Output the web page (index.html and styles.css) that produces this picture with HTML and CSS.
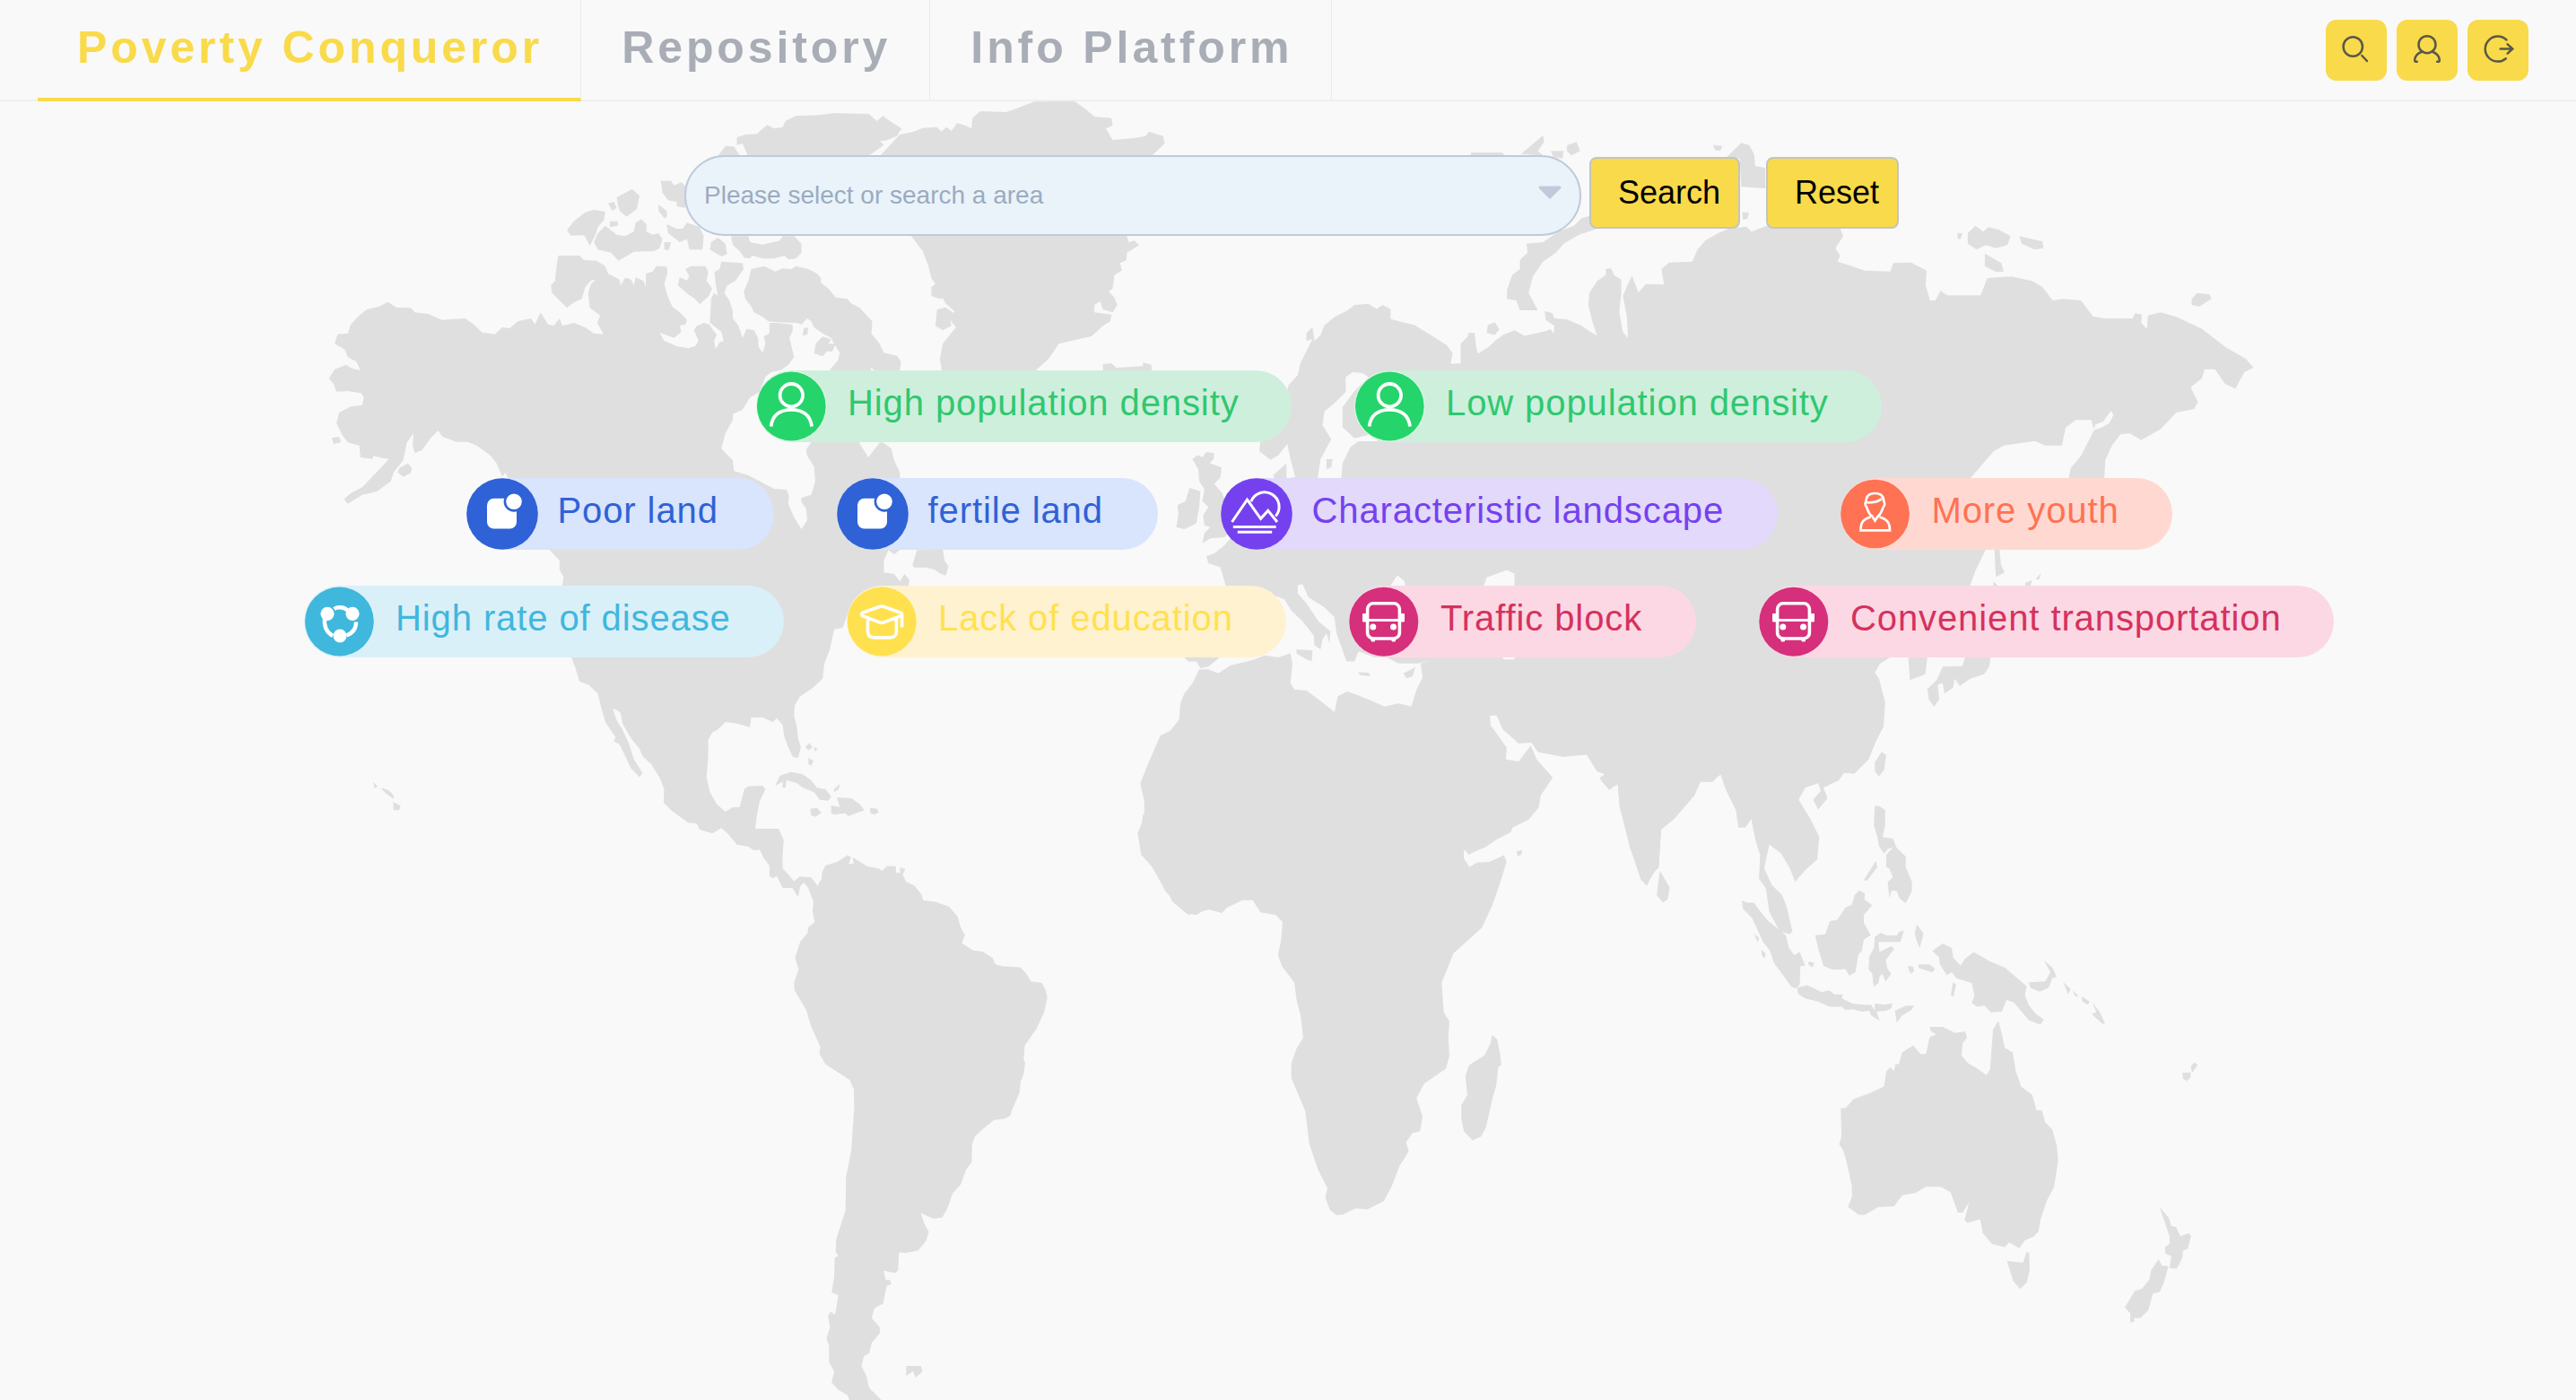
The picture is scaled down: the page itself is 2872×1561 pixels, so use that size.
FILE: index.html
```html
<!DOCTYPE html>
<html lang="en">
<head>
<meta charset="utf-8">
<title>Poverty Conqueror</title>
<link rel="stylesheet" href="styles.css">
</head>
<body>
<svg class="world" viewBox="0 0 2872 1561" aria-hidden="true">
  <!-- North America and Greenland -->
  <g transform="translate(340 100) scale(.63776 .33333)">
    <path d="M145,710 160,728 185,730 192,745 215,750 240,770 280,765 295,785 310,812 332,818 345,795 358,798 372,775 395,765 402,785 412,745 425,785 435,790 445,765 450,790 470,780 490,795 505,815 522,818 511,780 516,755 498,730 495,680 500,650 508,636 500,638 490,660 484,700 470,712 458,730 448,710 432,680 430,655 437,640 440,590 443,555 480,555 488,570 510,572 525,590 530,615 550,635 552,655 560,628 570,635 575,655 578,628 592,640 596,660 596,615 608,608 614,590 632,592 634,612 628,650 634,690 642,725 655,745 668,770 665,785 655,790 658,810 645,830 620,812 628,840 650,858 670,865 682,858 688,840 684,822 680,805 685,790 697,780 707,785 712,800 720,820 715,840 718,868 725,845 732,840 728,810 708,780 710,700 715,680 722,690 718,650 716,610 725,600 728,575 765,580 767,600 752,640 738,655 733,680 742,705 748,740 748,765 758,790 765,830 772,800 785,805 792,830 793,860 800,880 805,850 802,825 812,815 812,780 825,780 852,785 853,805 847,830 852,870 855,895 845,920 832,938 815,945 805,960 795,1010 778,1030 765,1070 748,1085 748,1105 735,1150 728,1200 735,1215 748,1240 750,1275 775,1290 800,1315 820,1335 842,1338 846,1360 845,1385 855,1430 868,1470 878,1440 876,1400 868,1380 868,1365 885,1355 892,1310 890,1260 878,1225 876,1205 885,1180 890,1100 925,1050 965,1150 970,1185 985,1230 1005,1180 1010,1180 1025,1200 1030,1240 1040,1280 1040,1540 430,1540 355,1300 350,1280 345,1295 335,1250 325,1225 300,1190 285,1178 265,1178 240,1160 233,1140 220,1165 205,1205 192,1215 188,1190 190,1150 178,1180 172,1240 155,1280 150,1310 125,1345 100,1355 75,1385 68,1370 80,1350 100,1330 125,1280 147,1235 135,1232 120,1225 118,1235 97,1230 95,1190 75,1180 65,1155 55,1115 60,1080 80,1060 100,1055 103,1030 98,1015 75,1008 55,1010 50,985 42,965 52,935 72,920 82,932 97,938 90,910 75,895 70,870 52,850 57,818 75,815 80,785 95,755 108,735 130,725Z"/>
    <path d="M780,600 803,590 822,608 835,598 850,600 858,590 880,600 895,615 902,630 902,645 915,665 928,695 948,700 955,715 970,730 982,755 992,775 990,815 1003,845 1012,880 1035,890 1042,910 1040,938 1010,960 990,930 985,960 925,960 918,935 932,905 935,880 925,850 920,830 905,815 890,795 885,775 878,765 868,785 860,780 828,778 810,775 800,760 785,745 780,725 770,700 767,675 775,640Z"/>
    <path d="M893,848 905,826 920,835 915,850 928,850 922,875 912,875 905,892 890,882ZM872,798 880,795 878,820 870,822ZM665,600 675,590 700,590 705,610 702,640 712,665 706,690 690,718 682,700 670,685 652,655 655,628 668,638 672,625ZM745,490 775,490 778,510 800,518 830,505 835,490 855,490 868,515 868,545 858,565 845,568 838,555 820,565 800,565 782,555 778,565 768,562 760,540 748,520ZM710,510 722,495 735,515 738,550 728,558 708,535ZM505,510 512,480 525,455 545,485 560,490 575,475 578,445 588,433 597,450 597,475 608,485 618,480 625,500 620,530 610,540 575,542 548,572 535,545 512,535ZM458,470 470,440 490,410 505,402 525,408 523,435 512,460 508,485 498,522 488,487 465,488ZM545,360 572,332 585,355 580,400 562,425 550,405 547,385ZM530,380 540,375 545,395 537,405ZM533,440 547,440 547,455 533,460ZM632,450 650,465 660,465 668,445 690,460 697,490 695,535 672,535 668,500 655,510 635,480ZM628,510 640,510 636,537 628,535ZM618,385 632,405 633,425 628,430 618,405ZM622,305 640,305 645,320 658,310 670,330 665,395 650,390 650,375 635,370 625,345ZM722,222 735,188 750,190 760,220ZM755,160 770,150 790,148 808,118 820,130 835,125 840,105 858,88 900,85 925,78 960,80 985,80 1000,105 1010,88 1025,108 1043,130 1035,155 1015,170 1005,172 1012,185 985,222 775,225 765,180 755,185Z"/>
    <path d="M1005,222 1030,170 1040,150 1065,140 1080,128 1105,125 1112,140 1122,125 1130,138 1140,112 1155,120 1165,130 1167,95 1180,72 1225,75 1245,62 1275,40 1345,38 1365,65 1380,90 1410,95 1412,120 1400,130 1412,168 1450,162 1470,155 1475,140 1500,155 1503,180 1480,222 1437,490 1440,510 1450,505 1458,520 1450,530 1437,545 1436,570 1425,580 1428,605 1415,620 1412,665 1405,675 1415,695 1420,720 1412,745 1395,735 1390,708 1380,720 1380,745 1410,752 1408,775 1395,790 1375,825 1340,840 1318,850 1300,900 1278,938 1278,960 1115,960 1110,900 1115,850 1138,795 1128,770 1135,740 1120,715 1115,698 1110,700 1095,690 1095,660 1102,650 1095,630 1090,590 1080,540 1060,490ZM1105,735 1120,728 1132,745 1140,758 1128,770 1130,790 1115,805 1102,790ZM1395,918 1410,915 1418,930 1465,925 1465,912 1480,920 1480,990 1400,990 1395,940ZM47,1165 60,1162 63,1180 50,1185ZM165,1265 180,1250 187,1265 185,1282 172,1295 162,1280Z"/>
  </g>
  <!-- Central America and the Caribbean -->
  <g transform="translate(340 550) scale(.63776 .33333)">
    <path d="M410,150 428,190 445,225 445,255 452,280 450,310 455,450 465,545 472,580 480,630 495,640 512,670 517,710 525,765 543,815 540,830 550,840 560,880 570,920 585,950 590,935 575,890 567,840 555,790 545,760 538,720 545,725 552,735 555,770 570,820 585,855 590,880 605,905 620,950 628,990 627,1035 640,1060 670,1102 685,1105 690,1125 712,1138 728,1120 740,1140 755,1175 775,1182 785,1195 795,1192 802,1220 812,1245 812,1280 818,1288 825,1280 835,1320 852,1320 862,1350 866,1315 872,1302 880,1320 890,1370 900,1330 895,1310 885,1285 865,1282 855,1298 845,1275 835,1255 835,1210 837,1160 828,1122 787,1122 790,1080 795,1030 805,990 800,978 775,980 768,990 760,1050 748,1050 735,1065 720,1040 708,1000 702,950 705,880 705,825 712,800 722,790 735,765 755,770 778,782 780,750 800,750 818,765 825,752 835,775 838,815 845,850 853,882 862,885 867,850 862,820 860,780 855,745 856,710 865,680 888,650 905,620 908,570 918,520 925,455 940,450 950,400 975,330 1040,320 1055,308 1057,290 1048,270 1040,295 1030,270 1012,265 1012,225 1020,190 1030,205 1040,190 1040,150Z"/>
    <path d="M1062,240 1070,190 1115,188 1118,225 1125,245 1120,275 1110,268 1100,255 1085,248 1065,248ZM822,978 830,945 850,932 870,940 885,960 895,985 910,990 920,1015 915,1028 900,1025 890,1000 870,985 860,970 842,960 840,985 835,985 835,965ZM920,1070 920,1045 935,1050 930,1018 955,1020 970,1040 978,1060 950,1080 945,1070 925,1075ZM883,1055 895,1052 903,1068 893,1082 885,1078ZM988,1052 1000,1055 1003,1068 995,1075 988,1070ZM875,848 882,835 887,850 880,860ZM889,848 896,855 892,864ZM880,885 889,895 885,912 880,905ZM925,990 935,972 933,990 925,1000ZM119,965 127,980 122,988ZM132,985 146,993 155,1010 155,1022 142,1005ZM154,1032 167,1045 165,1060 155,1060Z"/>
  </g>
  <!-- South America and southern Africa -->
  <g transform="translate(860 920) scale(.57398 .4088)">
    <path d="M90,165 98,145 98,130 105,110 128,100 148,82 155,88 150,105 160,105 158,88 170,98 185,112 208,118 215,125 225,112 242,112 242,130 250,130 250,115 260,120 255,135 262,155 278,165 292,190 295,205 320,210 345,222 362,250 368,280 376,300 370,322 392,342 410,345 430,362 435,380 450,385 483,388 495,405 505,427 525,430 533,450 536,470 530,510 515,555 492,602 490,640 493,648 490,680 484,700 482,730 468,775 464,792 455,800 432,805 410,830 395,850 390,870 389,920 378,940 368,980 352,1005 342,1045 332,1070 315,1074 290,1058 298,1090 306,1110 300,1135 285,1160 262,1167 248,1165 246,1215 240,1222 218,1215 222,1240 230,1240 233,1252 224,1257 217,1305 200,1318 195,1345 210,1368 211,1385 195,1412 190,1440 180,1448 175,1475 184,1500 190,1535 215,1570 152,1570 148,1555 130,1540 117,1520 122,1490 112,1465 112,1420 107,1400 114,1370 110,1340 115,1327 124,1335 130,1282 117,1275 122,1235 123,1180 130,1175 125,1165 126,1130 144,1050 145,960 155,890 161,770 160,720 152,695 105,652 93,622 95,605 76,545 68,505 45,450 44,430 53,393 46,362 56,318 70,295 72,278 84,265 80,235 82,205 72,175ZM262,1475 290,1475 294,1490 280,1507 275,1490 262,1502Z"/>
    <path d="M722,-30 719,0 712,22 718,80 740,115 752,145 765,180 805,240 825,245 845,228 875,240 885,225 915,205 935,205 950,238 980,245 993,265 990,315 984,355 992,385 1016,430 1020,475 1028,520 1033,580 1020,610 1010,650 1010,690 1037,780 1045,870 1062,940 1080,990 1076,1015 1085,1050 1098,1064 1110,1062 1135,1045 1158,1048 1190,1025 1205,985 1220,930 1238,890 1233,865 1245,840 1260,835 1265,795 1253,745 1268,705 1310,665 1317,630 1315,580 1317,535 1306,510 1302,430 1325,350 1380,280 1400,220 1415,160 1428,100 1423,82 1395,100 1370,102 1356,115 1345,90 1345,65 1355,75 1370,60 1388,58 1405,40 1435,18 1440,-10ZM1400,572 1410,585 1415,620 1418,655 1412,660 1408,710 1400,750 1388,825 1378,850 1362,860 1345,835 1340,800 1340,765 1352,735 1348,685 1355,655 1385,628 1397,595ZM1447,72 1458,68 1457,80 1450,85Z"/>
  </g>
  <!-- Northern Africa, the Middle East and Europe -->
  <g transform="translate(1220 320) scale(.446429)">
    <path d="M108,1365 125,1325 125,1285 115,1240 135,1190 165,1120 190,1108 212,1080 215,1040 225,1015 245,990 262,955 285,955 310,965 340,945 360,940 395,932 425,920 460,925 490,915 495,940 490,990 500,1005 530,1008 560,1030 600,1062 608,1022 632,1010 665,1022 725,1048 760,1040 792,1048 805,1005 820,975 815,940 850,930 1000,900 1000,1068 988,1070 990,1095 1030,1150 1028,1180 1060,1185 1090,1145 1105,1180 1145,1225 1115,1270 1110,1300 1085,1330 1045,1350 1040,1362 1005,1380 975,1400 950,1410 935,1418 925,1405 900,1500 400,1510 345,1540 235,1568 195,1535 165,1470 120,1410Z"/>
    <path d="M1000,900 988,1070 1005,1070 1020,1105 1060,1140 1095,1138 1110,1162 1170,1172 1230,1168 1250,1200 1275,1218 1262,1225 1285,1255 1308,1242 1312,1300 1345,1420 1365,1480 1380,1495 1395,1465 1410,1450 1415,1355 1440,1330 1470,1290 1500,1265 1515,1235 1540,1235 1568,1215 1600,1000 1600,900ZM1413,1458 1437,1500 1432,1530 1420,1537 1405,1520 1408,1490Z"/>
    <path d="M890,192 895,165 880,145 840,120 800,95 770,88 740,80 740,55 720,45 705,55 685,42 650,45 630,60 600,75 575,95 565,120 550,135 545,100 530,115 530,135 545,130 515,190 508,220 485,245 470,320 415,385 412,410 440,432 460,420 482,392 490,430 502,475 480,478 480,440 447,470 460,500 400,560 325,645 300,665 280,672 285,690 315,700 328,745 320,800 240,850 225,925 235,935 255,935 265,952 285,948 310,928 360,850 430,780 455,772 475,780 492,808 520,835 548,870 550,895 565,905 570,880 580,865 587,890 590,860 560,835 530,790 508,765 508,745 520,742 535,775 575,800 600,825 605,865 630,935 650,935 660,910 700,925 730,925 760,940 810,940 830,935 1000,950 1600,950 1600,150 1258,122 1230,110 1190,85 1150,80 1150,122 1140,105 1105,118 1075,122 1050,108 1020,120 985,150 960,168 952,150 950,115 935,115 925,150 930,190ZM245,430 258,420 270,425 280,412 300,415 298,430 288,440 318,450 315,475 300,492 320,515 335,560 350,600 325,625 290,628 270,640 275,615 290,600 275,595 272,570 285,550 270,535 275,505 262,485 260,455ZM238,502 265,510 262,550 255,590 225,605 205,600 210,570 208,545 228,535ZM505,905 545,908 543,935 530,930 505,915ZM658,962 685,963 690,972 665,970ZM772,965 802,950 795,972 780,978ZM983,95 1000,88 1012,105 1000,120 980,115Z"/>
    <path class="water" d="M628,225 645,213 670,215 685,225 650,260 620,300 620,350 650,378 690,368 710,385 660,385 640,400 620,440 617,477 558,477 565,430 592,380 570,345 575,310 600,290 628,262ZM740,746 757,720 775,735 777,746ZM973,746 980,725 1030,707 1060,720 1067,738 1050,746ZM1020,924 1057,924 1053,930 1022,930Z"/>
    <path d="M580,430 595,430 592,450 580,455Z"/>
  </g>
  <!-- Russia and the Arctic islands -->
  <g transform="translate(1640 100) scale(.57398 .33333)">
    <path d="M-20,900 -20,850 0,815 8,830 12,885 35,860 50,835 85,808 100,825 145,808 160,825 162,790 145,770 143,740 158,748 162,765 185,768 215,790 245,825 235,770 228,720 230,680 245,640 262,620 262,600 272,597 278,620 292,635 292,680 288,745 295,810 305,832 303,760 295,690 305,650 313,622 325,678 340,650 375,652 370,600 385,578 430,575 440,535 455,505 480,480 500,465 535,458 545,475 575,455 715,455 723,490 708,530 717,555 712,575 740,590 765,605 815,608 820,580 855,578 885,605 883,655 892,705 902,705 912,673 925,688 990,688 1003,630 1050,625 1090,640 1110,660 1130,705 1150,700 1185,705 1208,758 1230,765 1285,765 1290,748 1303,752 1302,780 1313,800 1315,755 1340,745 1370,760 1420,800 1465,860 1505,900 1520,930 1502,945 1485,1000 1465,985 1445,935 1425,935 1420,965 1398,995 1412,1045 1405,1068 1370,1080 1340,1135 1302,1172 1280,1150 1262,1152 1245,1190 1232,1240 1230,1310 1190,1380 1160,1310 1165,1265 1185,1225 1210,1140 1205,1105 1175,1105 1155,1130 1148,1190 1115,1190 1095,1175 1035,1190 1015,1210 990,1260 970,1300 940,1400 1000,1540 -20,1540Z"/>
    <path class="water" d="M1208,1140 1213,1120 1228,1110 1243,1075 1248,1088 1240,1115 1225,1130Z"/>
    <path d="M235,420 245,465 210,485 180,515 165,545 140,575 120,625 112,680 130,738 95,738 88,705 70,700 70,670 80,620 95,600 95,570 110,545 108,515 140,510 170,475 200,455 215,430ZM965,480 980,455 995,475 1005,460 1025,468 1048,490 1042,520 1020,530 1000,520 982,535 965,515ZM1065,490 1110,508 1112,530 1095,535 1070,515ZM945,480 955,480 950,502 945,495ZM998,548 1030,580 1035,608 1020,610 998,590ZM1400,700 1410,680 1435,685 1438,700 1415,725 1400,720ZM470,185 488,188 485,203 475,203ZM497,225 525,178 540,185 550,215 552,255 572,262 572,330 525,325 522,230ZM527,410 540,410 537,432 528,435ZM97,215 115,190 140,152 142,175 130,205 140,220ZM155,205 180,205 178,230 160,225ZM187,185 205,175 212,205 195,220 186,205ZM0,210 60,210 70,225 0,225Z"/>
  </g>
  <!-- South and East Asia -->
  <g transform="translate(1700 550) scale(.57398 .33333)">
    <path d="M-20,100 -20,820 12,832 25,865 75,882 120,873 140,930 155,940 147,960 165,992 180,970 185,1050 205,1190 235,1312 260,1245 265,1125 290,1090 330,1010 340,965 365,965 380,938 390,990 410,1060 415,1118 428,1118 440,1090 448,1160 457,1210 455,1290 468,1320 475,1400 495,1465 515,1475 520,1465 508,1380 500,1345 480,1310 465,1255 475,1175 498,1205 515,1255 525,1300 545,1260 568,1225 572,1150 555,1090 532,1025 545,985 570,970 575,995 560,1025 570,1058 588,1020 580,985 610,960 620,935 640,938 668,890 682,830 697,780 700,700 688,620 680,600 690,570 710,548 745,548 748,625 778,605 782,548 800,500 865,310 875,260 895,190 895,100Z"/>
    <path d="M905,548 902,580 892,605 865,620 845,645 835,620 832,650 815,670 812,635 802,640 805,690 795,714 785,690 782,655 800,625 812,580 850,578 855,548ZM912,185 922,185 925,240 932,265 915,280ZM910,295 922,315 910,315ZM972,300 985,290 982,315 972,315ZM993,285 1003,268 998,290ZM680,900 693,865 702,875 698,925 688,947 680,930ZM680,1045 690,1048 700,1060 700,1110 695,1150 715,1155 722,1185 740,1215 740,1250 752,1300 752,1330 740,1372 728,1355 722,1330 712,1330 708,1355 705,1300 715,1285 708,1255 702,1250 702,1210 715,1185 705,1190 698,1205 688,1180 685,1150 678,1110ZM682,1230 685,1250 665,1295 658,1295Z"/>
  </g>
  <!-- Indonesia and Oceania -->
  <g transform="translate(1880 960) scale(.408163 .344388)">
    <path d="M152,127 165,135 185,135 200,160 225,195 262,230 272,240 280,280 295,305 310,295 325,340 312,340 310,400 300,412 288,408 240,330 228,290 210,262 180,185 155,155ZM303,410 330,402 350,412 370,425 390,418 405,432 428,432 425,445 455,462 485,465 505,465 515,485 515,462 545,465 563,460 560,478 545,485 520,487 528,517 505,500 500,485 480,488 455,480 435,482 425,472 390,472 360,455 325,445 305,430ZM570,485 600,468 623,468 615,482 590,500 575,523ZM352,240 380,237 392,195 413,190 435,150 452,142 460,110 473,95 488,105 487,125 508,143 485,175 485,200 504,240 485,255 480,290 470,305 462,360 445,372 435,350 400,352 375,340 362,290ZM515,245 532,232 545,240 575,242 580,230 595,225 585,262 525,262 528,295 560,275 568,285 545,320 550,350 560,365 545,390 535,365 528,375 525,395 512,407 508,365 498,350 500,310 513,280ZM630,205 648,235 638,282 630,260 624,235ZM605,340 620,342 622,358 612,365ZM633,335 665,335 680,350 672,360 635,347ZM728,393 737,400 730,440 723,435ZM335,325 350,330 345,345 333,335ZM185,237 200,250 195,263ZM205,287 217,300 215,315 207,308Z"/>
    <path d="M672,292 700,267 725,282 730,315 750,338 760,318 785,295 830,325 870,345 900,375 930,405 925,435 935,465 955,495 977,513 967,530 935,515 895,458 875,450 862,488 832,490 815,468 795,472 780,460 787,435 780,395 738,380 725,360 712,370 693,335 690,310ZM935,393 980,390 995,360 977,322 1000,345 1012,375 1000,380 990,410 965,423 940,410ZM1030,392 1050,415 1043,432ZM1055,418 1072,438 1062,438ZM1080,438 1102,455 1097,465 1082,455ZM1110,458 1130,490 1144,527 1137,527 1107,495 1120,490ZM1355,685 1378,685 1378,700 1368,712 1357,705ZM1378,665 1388,652 1397,660 1382,685Z"/>
    <path d="M665,537 700,537 735,557 762,552 767,572 755,590 752,630 770,655 795,672 820,693 830,675 838,545 853,518 862,560 870,605 892,620 900,680 915,730 945,757 957,807 972,808 980,845 1000,870 1012,920 1016,970 1005,1055 985,1100 968,1160 962,1200 950,1215 925,1228 910,1254 882,1235 870,1250 835,1240 810,1205 803,1160 768,1172 760,1162 773,1105 755,1138 742,1138 722,1072 695,1055 655,1055 625,1075 590,1082 568,1118 525,1120 487,1146 470,1145 442,1120 453,1085 452,1050 437,970 428,935 418,918 424,890 422,800 435,800 458,770 500,752 540,730 547,680 558,667 567,680 572,655 580,660 590,620 620,597 640,625 655,625 665,570 683,562 668,550ZM876,1295 920,1300 930,1265 937,1270 938,1325 930,1365 912,1386 893,1360ZM1293,1120 1318,1155 1325,1182 1338,1185 1350,1215 1372,1205 1379,1213 1370,1255 1357,1262 1355,1285 1340,1320 1320,1318 1325,1280 1308,1270 1308,1250 1320,1240 1320,1215ZM1290,1290 1300,1310 1317,1312 1305,1365 1293,1395 1275,1400 1262,1455 1240,1480 1222,1480 1225,1490 1213,1495 1213,1465 1198,1445 1225,1392 1245,1385 1265,1355 1270,1325Z"/>
  </g>
</svg>

<svg class="sprite" aria-hidden="true">
  <symbol id="person" viewBox="0 0 80 80">
    <circle cx="39.3" cy="40" r="39.3" fill="#e9f8ef"/><circle cx="39.3" cy="40" r="38.4" fill="#25d56b"/>
    <g fill="none" stroke="#fff" stroke-width="3.8"><circle cx="39.3" cy="27.7" r="12.7"/><path d="M16.6 62.5C18 49.5 27 43.8 39.3 43.8S60.6 49.5 62 62.5"/></g>
  </symbol>
  <symbol id="land" viewBox="0 0 80 80">
    <circle cx="40" cy="40" r="39.8" fill="#2f62d6"/>
    <rect x="23" y="22.7" width="33" height="33.8" rx="7.5" fill="#fff"/><circle cx="53" cy="26.3" r="11.4" fill="#2f62d6"/><circle cx="53" cy="26.3" r="8.8" fill="#fff"/>
  </symbol>
  <symbol id="landscape" viewBox="0 0 80 80">
    <circle cx="40" cy="40" r="39.8" fill="#7541ee"/>
    <path d="M12.5 49 29.5 24.2 44.6 45.3 52.7 36.4 63 49M33.8 26.2A16.2 16.2 0 1 1 61.3 42.5M13.8 54.5H61.6M18.8 60.3H57.2" fill="none" stroke="#fff" stroke-width="3"/>
  </symbol>
  <symbol id="youth" viewBox="0 0 80 80">
    <circle cx="38.5" cy="40" r="38.3" fill="#ff7253"/>
    <path d="M34.6 42.5C31 39.5 30.3 35 28.8 32 26.6 29 27.4 28 28.3 26.5 28.5 19.5 33 17 38.4 17s9.8 2.5 10 9.5c.9 1.5 1.7 2.5-.5 5.5-1.5 3-2.2 7.500-5.8 10.500M29.5 27.500C35 27.500 42.500 26.500 46 23M34.600 41.500 38.500 47.500 42.400 41.500M33.500 43.500C25.500 46 22.500 49 22.500 58.300H55C55 49 51.500 46 43.500 43.500" fill="none" stroke="#fff" stroke-width="2.7"/>
  </symbol>
  <symbol id="disease" viewBox="0 0 80 80">
    <circle cx="39.4" cy="40" r="38.4" fill="#40b7dd"/>
    <g fill="#fff"><circle cx="26" cy="31.300" r="7.600"/><circle cx="54" cy="31.300" r="7.600"/><circle cx="40" cy="56" r="7.500"/></g>
    <path d="M33.500 26C37 23.500 44 23.500 48.500 27.500M23 36C22 45 25 52 32 56M58 40.500C58 47.500 54 53 47.500 55.500" fill="none" stroke="#fff" stroke-width="4.400"/>
  </symbol>
  <symbol id="education" viewBox="0 0 80 80">
    <circle cx="39.200" cy="40" r="38.500" fill="#ffe14f"/>
    <path d="M36.500 23.500 17.500 30.300Q15.500 32 17.500 33.700L36.500 40.800Q39 42 41.500 40.800L60.500 33.700Q62.500 32 60.500 30.300L41.500 23.500Q39 22.500 36.500 23.500ZM61.600 32V46.500M23.500 36.500V51.500Q24 57.500 30 57.900H49Q55 57.500 55.400 51.500V36.500" fill="none" stroke="#fff" stroke-width="3.600"/>
  </symbol>
  <symbol id="bus" viewBox="0 0 80 80">
    <circle cx="38.800" cy="40.200" r="38.500" fill="#d62f7b"/>
    <path d="M20.600 38.400H56.200" stroke="#fff" stroke-width="3"/>
    <rect x="20.600" y="19.800" width="35.800" height="39.200" rx="6.500" fill="none" stroke="#fff" stroke-width="3.600"/>
    <path d="M15.500 31.500H19V40H15.500ZM58 31.500H61.500V40H58ZM25 60H28.500V62H25ZM48 60H51.500V62H48Z" fill="#fff" stroke="#fff"/>
    <g fill="#fff"><circle cx="26.800" cy="46" r="3.500"/><circle cx="49.500" cy="46" r="3.500"/></g>
  </symbol>
</svg>

<header class="header">
  <nav class="nav">
    <a class="tab active">Poverty Conqueror</a>
    <a class="tab">Repository</a>
    <a class="tab">Info Platform</a>
  </nav>
  <div class="actions">
    <button class="action" aria-label="Search"><svg viewBox="0 0 68 68"><circle cx="30.300" cy="30" r="10.700"/><path d="M40.300 40 46 46"/></svg></button>
    <button class="action" aria-label="Account"><svg viewBox="0 0 68 68"><circle cx="34" cy="27.700" r="9.500"/><path d="M28.500 35.500C23 37.500 20.500 41.500 20.200 44.500 20 46.500 20.800 47.100 22.800 46.700M39.500 35.500C45 37.500 47.500 41.500 47.800 44.500 48 46.500 47.200 47.100 45.200 46.700"/></svg></button>
    <button class="action" aria-label="Log out"><svg viewBox="0 0 68 68"><path d="M43.500 22.500A14 14 0 1 0 42.900 43.200M36.700 32.400H50M44.700 27.300 50.300 32.400 44.700 37.600"/></svg></button>
  </div>
</header>

<main class="main">
  <form class="search">
    <div class="select"><span>Please select or search a area</span><svg class="caret" viewBox="0 0 28 16"><path d="M3 2H25L14 13Z"/></svg></div>
    <button class="btn btn-search" type="button">Search</button>
    <button class="btn btn-reset" type="button">Reset</button>
  </form>
  <section class="tags">
    <div class="row">
      <a class="tag green high-density"><svg><use href="#person"/></svg><span>High population density</span></a>
      <a class="tag green low-density"><svg><use href="#person"/></svg><span>Low population density</span></a>
    </div>
    <div class="row">
      <a class="tag blue poor-land"><svg><use href="#land"/></svg><span>Poor land</span></a>
      <a class="tag blue fertile-land"><svg><use href="#land"/></svg><span>fertile land</span></a>
      <a class="tag purple scenery"><svg><use href="#landscape"/></svg><span>Characteristic landscape</span></a>
      <a class="tag orange more-youth"><svg><use href="#youth"/></svg><span>More youth</span></a>
    </div>
    <div class="row">
      <a class="tag cyan sickness"><svg><use href="#disease"/></svg><span>High rate of disease</span></a>
      <a class="tag yellow schooling"><svg><use href="#education"/></svg><span>Lack of education</span></a>
      <a class="tag pink traffic"><svg><use href="#bus"/></svg><span>Traffic block</span></a>
      <a class="tag pink transport"><svg><use href="#bus"/></svg><span>Convenient transportation</span></a>
    </div>
  </section>
</main>
</body>
</html>
```
FILE: styles.css
```css
* { box-sizing: border-box; }

body {
  margin: 0;
  height: 1561px;
  overflow: hidden;
  position: relative;
  background: #f9f9f9;
  font-family: "Liberation Sans", Arial, sans-serif;
}

/* Decorative world map behind the page */
.world {
  position: absolute;
  top: 0;
  left: 0;
  width: 2872px;
  height: 1561px;
  z-index: -1;
  fill: #dfdfdf;
}
.world .water { fill: #f9f9f9; }
.sprite { display: none; }

.header {
  display: flex;
  justify-content: space-between;
  height: 113px;
  padding: 0 53px 0 42px;
  border-bottom: 2px solid #efefef;
  background: #f9f9f9;
}
.nav { display: flex; height: 113px; }
.tab {
  padding: 0 43px 0 45px;
  height: 111px;
  border-right: 1px solid #ebebeb;
  color: #a9adb6;
  font-size: 50px;
  font-weight: bold;
  line-height: 106px;
  letter-spacing: 3.9px;
  white-space: nowrap;
}
.tab.active {
  height: 113px;
  padding: 0 42px 0 44px;
  color: #f9da4a;
  border-bottom: 4px solid #f9da4a;
}
.actions { display: flex; gap: 11px; padding-top: 22px; }
.action {
  width: 68px;
  height: 68px;
  padding: 0;
  border: 0;
  border-radius: 12px;
  background: #f9da4a;
}
.action svg {
  display: block;
  width: 68px;
  height: 68px;
  fill: none;
  stroke: #5a5848;
  stroke-width: 2.5;
  stroke-linecap: round;
}

.main { padding-top: 60px; }
.search {
  display: flex;
  align-items: flex-start;
  margin-left: 763px;
  height: 90px;
}
.select {
  display: flex;
  align-items: center;
  justify-content: space-between;
  width: 1000px;
  height: 90px;
  padding: 0 19px 0 20px;
  border: 2px solid #bfcbda;
  border-radius: 45px;
  background: #eaf3f9;
  color: #9aabc2;
  font-size: 28px;
}
.caret {
  width: 28px;
  height: 16px;
  margin-bottom: 6px;
  fill: #bfcbda;
  stroke: #bfcbda;
  stroke-width: 3;
  stroke-linejoin: round;
}
.btn {
  height: 80px;
  margin-top: 2px;
  padding: 0 0 1px 10px;
  border: 2px solid #c3c4c3;
  border-radius: 8px;
  background: #f9da4a;
  color: #000;
  font: 36px "Liberation Sans", Arial, sans-serif;
}
.btn-search { width: 168px; margin-left: 9px; }
.btn-reset { width: 148px; margin-left: 29px; }

.tags {
  display: flex;
  flex-direction: column;
  gap: 40px;
  padding: 150px 0 0 69px;
}
.row { display: flex; justify-content: center; gap: 70px; }
.tag {
  display: flex;
  align-items: center;
  height: 80px;
  border-radius: 40px;
  font-size: 40px;
  letter-spacing: 0.9px;
  white-space: nowrap;
}
.tag svg { flex: none; width: 80px; height: 80px; margin-right: 22px; }
.tag span { padding-bottom: 7px; }

.green { background: #ceefdc; color: #2fc870; }
.blue { background: #d9e4fd; color: #2f62d6; }
.purple { background: #e2d9fb; color: #7541ee; }
.orange { background: #ffd9d1; color: #ff7253; }
.cyan { background: #daf0f8; color: #40b7dd; }
.yellow { background: #fff2d0; color: #ffe14f; }
.pink { background: #fcd8e4; color: #d6315e; }

.high-density { width: 597px; }
.low-density { width: 588px; }
.poor-land { width: 343px; }
.fertile-land { width: 358px; }
.scenery { width: 621px; }
.more-youth { width: 370px; }
.sickness { width: 535px; }
.schooling { width: 490px; }
.traffic { width: 387px; }
.transport { width: 641px; }
```
